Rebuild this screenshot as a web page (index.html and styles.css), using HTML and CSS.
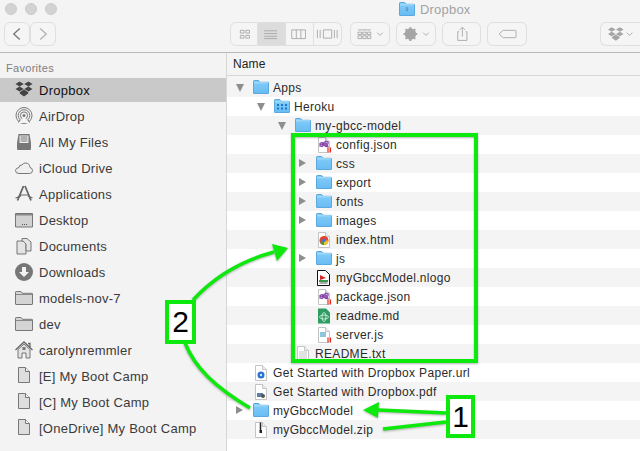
FILE: index.html
```html
<!DOCTYPE html>
<html lang="en">
<head>
<meta charset="utf-8">
<title>Dropbox</title>
<link rel="stylesheet" href="styles.css">
</head>
<body>
<svg class="defs" width="0" height="0" aria-hidden="true">
  <defs>
    <linearGradient id="fg" x1="0" y1="0" x2="0" y2="1"><stop offset="0" stop-color="#84cdf9"/><stop offset="1" stop-color="#68bcf3"/></linearGradient>
    <symbol id="dbx" viewBox="0 0 18 16"><path d="M4.500 0.500 0.500 3 4.500 5.500 8.800 3ZM13.500 0.500 9.200 3 13.500 5.500 17.500 3ZM0.500 8 4.500 10.500 8.800 8 4.500 5.500ZM13.500 5.500 9.200 8 13.500 10.500 17.500 8ZM9 8.600 4.800 11.200 4.800 12.400 9 15.400 13.200 12.400 13.200 11.200Z"/></symbol>
    <symbol id="folder" viewBox="0 0 16 14"><path d="M0.500 13V1.200Q0.500 0.500 1.200 0.500H5.600L7 2.300H15Q15.500 2.300 15.500 3V13Q15.500 13.500 15 13.500H1Q0.500 13.500 0.500 13Z" fill="url(#fg)" stroke="#5aa8dd"/><path d="M1 2.800H15" stroke="#b0e0fb"/></symbol>
    <symbol id="appfolder" viewBox="0 0 16 14"><use href="#folder"/><path d="M3 5h2v2H3zM7 5h2v2H7zM11 5h2v2h-2zM3 8.500h2v2H3zM7 8.500h2v2H7zM11 8.500h2v2h-2z" fill="#1e78c8"/></symbol>
    <symbol id="gfolder" viewBox="0 0 18 14"><path d="M0.500 13V1.200Q0.500 0.500 1.200 0.500H6L7.400 2.300H17Q17.500 2.300 17.500 3V13Q17.500 13.500 17 13.500H1Q0.500 13.500 0.500 13Z" fill="#d4d4d4" stroke="#777"/><path d="M1 3.500H17" stroke="#8a8a8a"/></symbol>
    <symbol id="doc" viewBox="0 0 12 16"><path d="M0.500 0.500H7.500L11.500 4.500V15.500H0.500Z" fill="#fff" stroke="#c4c4c4"/><path d="M7.500 0.500V4.500H11.500" fill="#eee" stroke="#c4c4c4"/></symbol>
    <symbol id="gdoc" viewBox="0 0 12 16"><path d="M0.500 0.500H7.500L11.500 4.500V15.500H0.500Z" fill="#dedede" stroke="#777"/><path d="M7.500 0.500V4.500H11.500" fill="#f3f3f3" stroke="#777"/></symbol>
    <symbol id="vs" viewBox="0 0 14 16"><use href="#doc" width="12" height="16"/><path d="M2 6.500 4 5.500 8 8.500 10 7V5L8 4 4 7.500 2 6.800V9L4 9.500 8 6 10 9.500H8L4 7" fill="none" stroke="#8a4bab" stroke-width="1.300"/><path d="M10 10.500V15.500M12.500 10.500V15.500" stroke="#e8281e" stroke-width="1.200"/></symbol>
  </defs>
</svg>

<div class="window">
  <header class="toolbar">
    <div class="titlebar">
      <div class="lights"><i class="light"></i><i class="light"></i><i class="light"></i></div>
      <div class="title">
        <svg class="title-ic" viewBox="0 0 16 14"><use href="#folder"/><path d="M6.500 6 8 5l1.500 1-1.500 1zM6.500 8 8 7l1.500 1L8 9.500z" fill="#5b8fc0"/></svg>
        <span>Dropbox</span>
      </div>
    </div>
    <div class="tools">
      <div class="seg nav">
        <span class="btn b-nav"><svg viewBox="0 0 26 24"><path d="M16 6 9.500 12 16 18" class="ln dark"/></svg></span>
        <span class="btn b-nav"><svg viewBox="0 0 26 24"><path d="M10 6 16.500 12 10 18" class="ln"/></svg></span>
      </div>
      <div class="seg views">
        <span class="btn b-view"><svg viewBox="0 0 28 24"><path d="M10 8h4v3h-4zM16 8h4v3h-4zM10 13.500h4v3h-4zM16 13.500h4v3h-4z" class="ln thin"/></svg></span>
        <span class="btn b-view on"><svg viewBox="0 0 28 24"><path d="M6 8.500H20M6 11.500H20M6 14.500H20M6 17H20" class="ln thin"/></svg></span>
        <span class="btn b-view"><svg viewBox="0 0 28 24"><path d="M5.500 7.500H20.500V17H5.500ZM10.500 7.500V17M15.500 7.500V17" class="ln thin"/></svg></span>
        <span class="btn b-view"><svg viewBox="0 0 28 24"><path d="M9.500 7.500H18.500V16.500H9.500ZM3 7.500V16.500M6 7.500V16.500M21.500 7.500V16.500M24.500 7.500V16.500" class="ln thin"/></svg></span>
      </div>
      <span class="btn b-tool arrange"><svg viewBox="0 0 40 24"><path d="M7 7.500H21M7 10H11V12.500H7ZM12.200 10H16V12.500H12.200ZM17.200 10H21V12.500H17.200ZM7 14H11V17H7ZM12.200 14H16V17H12.200ZM17.200 14H21V17H17.200Z" class="ln thin"/><path d="M28 10.500 31 13.500 34 10.500" class="ln thin"/></svg></span>
      <span class="btn b-tool gear"><svg viewBox="0 0 40 24"><circle cx="14" cy="12" r="4.500" fill="none" stroke="#a5a5a5" stroke-width="3.500"/><path d="M14 4.500V19.500M6.500 12H21.500M8.700 6.700 19.300 17.300M19.300 6.700 8.700 17.300" stroke="#a5a5a5" stroke-width="2.200"/><path d="M28 10.500 31 13.500 34 10.500" class="ln thin"/></svg></span>
      <span class="btn b-tool share"><svg viewBox="0 0 40 24"><path d="M17 9.500H15.500V19H25.500V9.500H24M20.500 15V5M17.500 7.500 20.500 4.500 23.500 7.500" class="ln thin"/></svg></span>
      <span class="btn b-tool tag"><svg viewBox="0 0 40 24"><path d="M11.500 12 16 8H29Q30 8 30 9V15Q30 16 29 16H16Z" class="ln thin"/></svg></span>
      <span class="btn b-tool dbx-btn"><svg viewBox="0 0 40 24"><use href="#dbx" x="6" y="4" width="18" height="16" fill="#a5a5a5"/><path d="M27 10.500 30 13.500 33 10.500" class="ln thin"/></svg></span>
    </div>
  </header>

  <div class="main">
    <aside class="sidebar">
      <div class="fav-title">Favorites</div>
      <ul class="side-list">
        <li class="side-item selected"><svg class="s-ic"><use href="#dbx" width="18" height="16" fill="#444"/></svg><span>Dropbox</span></li>
        <li class="side-item"><svg class="s-ic" viewBox="0 0 18 18"><g fill="none" stroke="#777"><circle cx="9" cy="8.500" r="8"/><circle cx="9" cy="8.500" r="5.800"/><circle cx="9" cy="8.500" r="3.600"/></g><circle cx="9" cy="8.500" r="1.500" fill="#777"/><path d="M3 16 9 9.500 15 16Z" fill="#f3f3f3"/><path d="M3.500 15.500 5 13M14.500 15.500 13 13" stroke="#777"/></svg><span>AirDrop</span></li>
        <li class="side-item"><svg class="s-ic" viewBox="0 0 18 18"><path d="M3.500 1H14.500L16 10V16Q16 17 15 17H3Q2 17 2 16V10Z" fill="#777"/><path d="M4.500 2.500H13.500V10H4.500Z" fill="#eee"/><path d="M5.500 4H12.500M5.500 6H12.500M5.500 8H12.500" stroke="#777"/></svg><span>All My Files</span></li>
        <li class="side-item"><svg class="s-ic" viewBox="0 0 18 18"><path d="M4 14.500H14.500Q17.500 14.500 17.500 11.500 17.500 9 15 8.500 14.500 4 10.500 4 8 4 7 6 4 5.500 4 8.500 0.500 9 0.500 11.500 0.500 14.500 4 14.500Z" fill="#efefef" stroke="#777"/></svg><span>iCloud Drive</span></li>
        <li class="side-item"><svg class="s-ic" viewBox="0 0 18 18"><path d="M10 1 16 15.500M8.500 1 2.500 15.500" fill="none" stroke="#666" stroke-width="1.800"/><path d="M5 10H13M0.500 13 6 11M17.500 13 13 11" fill="none" stroke="#666" stroke-width="1.200"/></svg><span>Applications</span></li>
        <li class="side-item"><svg class="s-ic" viewBox="0 0 18 18"><path d="M0.500 2.500H17.500V16H0.500Z" fill="#d2d2d2" stroke="#777"/><path d="M1 3H17V4.500H1Z" fill="#888"/><path d="M7 13.500H8M9 13.500H10M11 13.500H12" stroke="#555"/></svg><span>Desktop</span></li>
        <li class="side-item"><svg class="s-ic" viewBox="0 0 18 18"><path d="M2 4H8L11 7V17H2Z" fill="#e4e4e4" stroke="#777"/><path d="M7 1.500H12L16 5V14H11V7L8 4H7Z" fill="#e4e4e4" stroke="#777"/></svg><span>Documents</span></li>
        <li class="side-item"><svg class="s-ic" viewBox="0 0 18 18"><circle cx="9" cy="9" r="9" fill="#777"/><path d="M7 4H11V9H14L9 14 4 9H7Z" fill="#f3f3f3"/></svg><span>Downloads</span></li>
        <li class="side-item"><svg class="s-ic"><use href="#gfolder" y="2" width="18" height="14"/></svg><span>models-nov-7</span></li>
        <li class="side-item"><svg class="s-ic"><use href="#gfolder" y="2" width="18" height="14"/></svg><span>dev</span></li>
        <li class="side-item"><svg class="s-ic" viewBox="0 0 18 18"><path d="M0.500 9 9 1 17.500 9M13 2.500H15V6" fill="none" stroke="#666" stroke-width="1.300"/><path d="M3 8.500 9 3 15 8.500V17H11V12H7V17H3Z" fill="#e4e4e4" stroke="#777"/><path d="M7.500 6H10.500V9H7.500Z" fill="#777"/></svg><span>carolynremmler</span></li>
        <li class="side-item"><svg class="s-ic"><use href="#gdoc" x="3" width="12" height="16"/></svg><span>[E] My Boot Camp</span></li>
        <li class="side-item"><svg class="s-ic"><use href="#gdoc" x="3" width="12" height="16"/></svg><span>[C] My Boot Camp</span></li>
        <li class="side-item"><svg class="s-ic"><use href="#gdoc" x="3" width="12" height="16"/></svg><span>[OneDrive] My Boot Camp</span></li>
      </ul>
    </aside>

    <section class="files">
      <div class="col-head">Name</div>
      <ul class="rows">
        <li class="row d0"><i class="tri open"></i><svg class="f-ic"><use href="#folder" width="16" height="14"/></svg><span>Apps</span></li>
        <li class="row d1"><i class="tri open"></i><svg class="f-ic"><use href="#appfolder" width="16" height="14"/></svg><span>Heroku</span></li>
        <li class="row d2"><i class="tri open"></i><svg class="f-ic"><use href="#folder" width="16" height="14"/></svg><span>my-gbcc-model</span></li>
        <li class="row d3"><i class="tri none"></i><svg class="f-ic"><use href="#vs" x="2" width="14" height="16"/></svg><span>config.json</span></li>
        <li class="row d3"><i class="tri"></i><svg class="f-ic"><use href="#folder" width="16" height="14"/></svg><span>css</span></li>
        <li class="row d3"><i class="tri"></i><svg class="f-ic"><use href="#folder" width="16" height="14"/></svg><span>export</span></li>
        <li class="row d3"><i class="tri"></i><svg class="f-ic"><use href="#folder" width="16" height="14"/></svg><span>fonts</span></li>
        <li class="row d3"><i class="tri"></i><svg class="f-ic"><use href="#folder" width="16" height="14"/></svg><span>images</span></li>
        <li class="row d3"><i class="tri none"></i><svg class="f-ic" viewBox="0 0 16 16"><use href="#doc" x="2" width="12" height="16"/><circle cx="8" cy="8.500" r="4.500" fill="#e2452f"/><path d="M8 8.500 4.100 10.700A4.500 4.500 0 0 0 8 13Z" fill="#3ba04b"/><path d="M8 8.500V13A4.500 4.500 0 0 0 12.500 8.500Z" fill="#f5c528"/><circle cx="8" cy="8.500" r="1.800" fill="#3a78d8"/></svg><span>index.html</span></li>
        <li class="row d3"><i class="tri"></i><svg class="f-ic"><use href="#folder" width="16" height="14"/></svg><span>js</span></li>
        <li class="row d3"><i class="tri none"></i><svg class="f-ic" viewBox="0 0 16 16"><path d="M1.500 0.500H9.500L13.500 4.500V15.500H1.500Z" fill="#fff" stroke="#111"/><path d="M4 5 10 8 4 10Z" fill="#d42a2a"/><path d="M3 10H12V12H3Z" fill="#3a9a4a"/><path d="M3.500 13H11.500" stroke="#555"/></svg><span>myGbccModel.nlogo</span></li>
        <li class="row d3"><i class="tri none"></i><svg class="f-ic"><use href="#vs" x="2" width="14" height="16"/></svg><span>package.json</span></li>
        <li class="row d3"><i class="tri none"></i><svg class="f-ic" viewBox="0 0 16 16"><path d="M2 0.500H10L14 4.500V15.500H2Z" fill="#2f9c63"/><g fill="none" stroke="#bfe8cf"><ellipse cx="8" cy="9" rx="4.500" ry="2"/><ellipse cx="8" cy="9" rx="2" ry="4.500"/></g></svg><span>readme.md</span></li>
        <li class="row d3"><i class="tri none"></i><svg class="f-ic" viewBox="0 0 16 16"><use href="#doc" x="2" width="12" height="16"/><path d="M4 5H10V10H4Z" fill="#8fc4dc"/><path d="M12 10.500V15.500M14.500 10.500V15.500" stroke="#e8281e" stroke-width="1.200"/></svg><span>server.js</span></li>
        <li class="row d2"><i class="tri none"></i><svg class="f-ic" viewBox="0 0 16 16"><use href="#doc" x="2" width="12" height="16"/><path d="M4 6H12M4 8H12M4 10H12M4 12H12M4 14H12" stroke="#c4c4c4"/></svg><span>README.txt</span></li>
        <li class="row d0"><i class="tri none"></i><svg class="f-ic" viewBox="0 0 16 16"><use href="#doc" x="2" width="12" height="16"/><circle cx="8" cy="10" r="3.500" fill="#2a72d0"/><circle cx="8" cy="10" r="1.200" fill="#cfe3f8"/></svg><span>Get Started with Dropbox Paper.url</span></li>
        <li class="row d0"><i class="tri none"></i><svg class="f-ic" viewBox="0 0 16 16"><use href="#doc" x="2" width="12" height="16"/><path d="M4 9H10V13H4Z" fill="#5c7fa8"/><circle cx="10" cy="12" r="2" fill="#555"/></svg><span>Get Started with Dropbox.pdf</span></li>
        <li class="row d0"><i class="tri"></i><svg class="f-ic"><use href="#folder" width="16" height="14"/></svg><span>myGbccModel</span></li>
        <li class="row d0"><i class="tri none"></i><svg class="f-ic" viewBox="0 0 16 16"><use href="#doc" x="2" width="12" height="16"/><path d="M7.500 0.500V8" stroke="#222" stroke-width="1.500"/><path d="M6.500 8H9V11H6.500Z" fill="#222"/></svg><span>myGbccModel.zip</span></li>
      </ul>
    </section>
  </div>

  <svg class="arrows" viewBox="0 0 640 451">
    <g fill="none" stroke="#0de80d" stroke-width="3.500">
      <path d="M193 300C215 276 240 261 274 252"/>
      <path d="M185 343C195 368 215 387 250 408"/>
      <path d="M378 410 446 413"/>
      <path d="M383 429 446 422"/>
    </g>
    <path d="M288 248 272 244 277 261Z" fill="#0de80d"/>
    <path d="M363 410 379 402 378 418Z" fill="#0de80d"/>
  </svg>
  <div class="frame"></div>
  <div class="num num-2">2</div>
  <div class="num num-1">1</div>
</div>
</body>
</html>
```
FILE: styles.css
```css
* { box-sizing: border-box; margin: 0; padding: 0; }
html, body { width: 640px; height: 451px; overflow: hidden; }
body { background: #fff; font-family: "Liberation Sans", Arial, sans-serif; font-size: 13px; color: #2b2b2b; }
ul { list-style: none; }
.defs { position: absolute; }
.window { position: relative; width: 640px; height: 451px; display: flex; flex-direction: column; overflow: hidden; }

.toolbar { height: 53px; background: #f4f4f4; border-bottom: 1px solid #b8b8b8; flex: none; }
.titlebar { height: 22px; display: flex; align-items: center; padding-left: 5px; }
.lights { display: flex; gap: 8px; margin-top: -4px; }
.light { width: 12px; height: 12px; border-radius: 50%; background: #d2d2d2; border: 1px solid #cbcbcb; }
.title { display: flex; align-items: center; gap: 5px; margin-left: 342px; margin-top: -4px; color: #a3a3a3; font-size: 13px; letter-spacing: .2px; }
.title-ic { width: 16px; height: 14px; }
.tools { display: flex; height: 24px; padding-left: 4px; }
.seg { display: flex; }
.btn { display: block; height: 24px; border: 1px solid #dfdfdf; background: #f5f5f5; border-radius: 6px; }
.btn svg { display: block; width: 100%; height: 100%; }
.ln { fill: none; stroke: #b4b4b4; stroke-width: 1.500; }
.ln.dark { stroke: #7a7a7a; }
.ln.thin { stroke: #a8a8a8; stroke-width: 1; }
.b-nav { width: 26px; }
.views { margin-left: 174px; }
.b-view { width: 28px; border-radius: 0; border-left-width: 0; }
.b-view:first-child { border-left-width: 1px; border-radius: 6px 0 0 6px; }
.b-view:last-child { border-radius: 0 6px 6px 0; }
.b-view.on { background: #dcdcdc; }
.b-tool { width: 40px; margin-left: 6px; }
.arrange { margin-left: 8px; }
.dbx-btn { margin-left: 73px; border-radius: 6px 0 0 6px; border-right-width: 0; }

.main { flex: 1; display: flex; min-height: 0; }
.sidebar { width: 227px; flex: none; background: #f3f3f3; border-right: 1px solid #d6d6d6; }
.fav-title { height: 25px; padding: 9px 0 0 6px; font-size: 11px; line-height: 13px; color: #7d7d7d; letter-spacing: .3px; }
.side-list { display: flex; flex-direction: column; gap: 2px; }
.side-item { height: 24px; display: flex; align-items: center; padding-left: 15px; gap: 6px; letter-spacing: .25px; color: #3a3a3a; }
.side-item.selected { background: #c9c9c9; color: #111; }
.s-ic { width: 18px; height: 18px; flex: none; }

.files { flex: 1; min-width: 0; display: flex; flex-direction: column; }
.col-head { height: 23px; flex: none; background: #f4f4f4; border-bottom: 1px solid #d8d8d8; padding-left: 6px; font-size: 12px; line-height: 22px; color: #222; letter-spacing: .1px; }
.rows { flex: 1; padding-top: 2px; background: linear-gradient(#f4f4f4 2px, #fff 2px); }
.row { height: 19px; display: flex; align-items: center; font-size: 12px; letter-spacing: .32px; color: #2b2b2b; }
.row:nth-child(odd) { background: #f4f4f4; }
.d0 { padding-left: 6px; }
.d1 { padding-left: 27px; }
.d2 { padding-left: 48px; }
.d3 { padding-left: 69px; }
.tri { width: 14px; height: 19px; flex: none; margin-right: 6px; position: relative; display: block; }
.tri::before { content: ""; position: absolute; left: 3px; top: 5px; border-left: 7.500px solid #8e8e8e; border-top: 4.500px solid transparent; border-bottom: 4.500px solid transparent; }
.tri.open::before { left: 3px; top: 6px; border-top: 8px solid #8e8e8e; border-left: 4.500px solid transparent; border-right: 4.500px solid transparent; border-bottom: 0; }
.tri.none::before { display: none; }
.f-ic { width: 16px; height: 16px; flex: none; margin-right: 4px; }

.arrows { position: absolute; inset: 0; width: 640px; height: 451px; pointer-events: none; filter: drop-shadow(0 1px 1px rgba(0,0,0,.3)); }
.frame { position: absolute; left: 291px; top: 133px; width: 187px; height: 230px; border: 4px solid #0de80d; box-shadow: 0 1px 2px rgba(0,0,0,.3), inset 0 1px 2px rgba(0,0,0,.3); }
.num { position: absolute; background: #fff; border: 4px solid #0de80d; font-family: "Liberation Sans", Arial, sans-serif; font-size: 30px; color: #000; display: flex; align-items: center; justify-content: center; }
.num-2 { left: 165px; top: 300px; width: 31px; height: 44px; }
.num-1 { left: 446px; top: 395px; width: 29px; height: 43px; }
```
